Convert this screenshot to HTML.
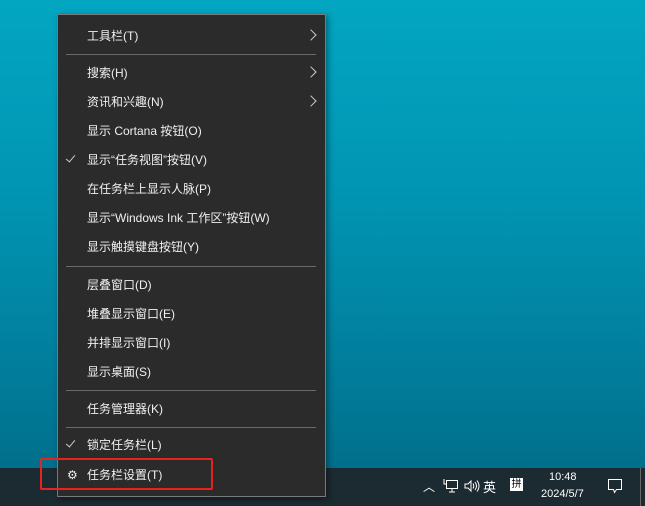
<!DOCTYPE html>
<html><head><meta charset="utf-8"><style>
*{margin:0;padding:0;box-sizing:border-box}
body{width:645px;height:506px;overflow:hidden;position:relative;font-family:"Liberation Sans","Noto Sans CJK SC",sans-serif;background:linear-gradient(180deg,#02a6c1 0%,#0194b2 40%,#017c9a 75%,#016a86 100%)}
.tb{position:absolute;left:0;top:468px;width:645px;height:38px;background:#1c2a31}
.menu{position:absolute;left:57px;top:14px;width:269px;height:483px;background:#2b2b2b;border:1px solid #7a7a7a;box-shadow:2px 2px 6px rgba(0,0,0,.4)}
.it{position:absolute;left:29px;font-size:12px;color:#f0f0f0;line-height:14px}
.sep{position:absolute;left:8px;width:250px;height:1px;background:#6a6a6a}
.ar{position:absolute;left:249px;width:8px;height:8px;border-right:1.3px solid #ccc;border-top:1.3px solid #ccc;transform:rotate(45deg)}
.ck{position:absolute;left:10px;width:5px;height:9px;border-right:1.3px solid #ccc;border-bottom:1.3px solid #ccc;transform:rotate(40deg)}
.red{position:absolute;left:40px;top:458px;width:173px;height:32px;border:2px solid #e8231c;border-radius:2px}
.t{position:absolute;color:#fff;font-size:11px}
</style></head><body>
<div class="tb"></div>
<div class="menu">
<div class="it" style="top:14px">工具栏(T)</div><div class="ar" style="top:16px"></div>
<div class="sep" style="top:39px"></div>
<div class="it" style="top:51px">搜索(H)</div><div class="ar" style="top:53px"></div>
<div class="it" style="top:80px">资讯和兴趣(N)</div><div class="ar" style="top:82px"></div>
<div class="it" style="top:109px">显示 Cortana 按钮(O)</div>
<div class="ck" style="top:138px"></div><div class="it" style="top:138px">显示“任务视图”按钮(V)</div>
<div class="it" style="top:167px">在任务栏上显示人脉(P)</div>
<div class="it" style="top:196px">显示“Windows Ink 工作区”按钮(W)</div>
<div class="it" style="top:225px">显示触摸键盘按钮(Y)</div>
<div class="sep" style="top:251px"></div>
<div class="it" style="top:263px">层叠窗口(D)</div>
<div class="it" style="top:292px">堆叠显示窗口(E)</div>
<div class="it" style="top:321px">并排显示窗口(I)</div>
<div class="it" style="top:350px">显示桌面(S)</div>
<div class="sep" style="top:375px"></div>
<div class="it" style="top:387px">任务管理器(K)</div>
<div class="sep" style="top:412px"></div>
<div class="ck" style="top:423px"></div><div class="it" style="top:423px">锁定任务栏(L)</div>
<div class="it" style="top:453px;left:9px;font-size:12px">⚙</div>
<div class="it" style="top:453px">任务栏设置(T)</div>
</div>
<div class="red"></div>
<div class="t" style="left:423px;top:478px;font-size:12px">︿</div>
<svg style="position:absolute;left:443px;top:478px" width="16" height="16" viewBox="0 0 16 16" fill="none" stroke="#fff" stroke-width="1"><rect x="3.5" y="2.5" width="11" height="8"/><path d="M9 11v3M6 14h6M1 1v5h3"/></svg>
<svg style="position:absolute;left:464px;top:479px" width="16" height="14" viewBox="0 0 16 14" fill="none" stroke="#fff" stroke-width="1"><path d="M1 5h3l3-3v10l-3-3H1z M9 4.5q1.5 2.5 0 5M11 3q3 4 0 8M13 1.5q4 5.5 0 11"/></svg>
<div class="t" style="left:483px;top:477px;font-size:13px">英</div>
<div class="t" style="left:510px;top:478px;background:#fff;color:#000;width:13px;height:13px;line-height:13px;text-align:center;font-size:10px">拼</div>
<div class="t" style="left:549px;top:471px">10:48</div>
<div class="t" style="left:541px;top:488px">2024/5/7</div>
<svg style="position:absolute;left:607px;top:478px" width="16" height="16" viewBox="0 0 16 16" fill="none" stroke="#fff" stroke-width="1"><path d="M1.5 1.5h13v10h-5l-2 3-1-3h-5z"/></svg>
<div style="position:absolute;left:640px;top:468px;width:1px;height:38px;background:#666"></div>
</body></html>
